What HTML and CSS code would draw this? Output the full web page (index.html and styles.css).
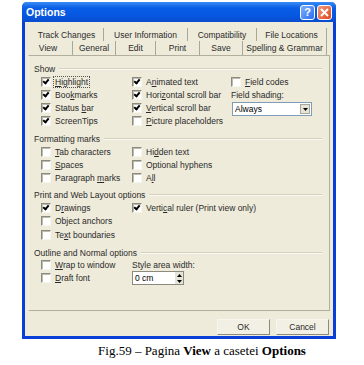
FILE: index.html
```html
<!DOCTYPE html>
<html lang="ro">
<head>
  <meta charset="UTF-8">
  <title>Options</title>
  <link rel="stylesheet" href="styles.css">
</head>
<body>
  <div class="window">
    <div class="titlebar">
      <span class="title">Options</span>
      <span class="tb-btn tb-help">?</span>
      <span class="tb-btn tb-close">
        <svg width="9" height="9" viewBox="0 0 9 9"><path d="M1 1 L8 8 M8 1 L1 8" stroke="#fff" stroke-width="2"/></svg>
      </span>
    </div>

    <div class="client">
      <div class="tabs tabs-back">
        <span class="tab" style="width:74px">Track Changes</span>
        <span class="tab" style="width:84px">User Information</span>
        <span class="tab" style="width:69px">Compatibility</span>
        <span class="tab" style="width:70px">File Locations</span>
      </div>
      <div class="tabs tabs-front">
        <span class="tab tab-active" style="width:45px">View</span>
        <span class="tab" style="width:43px">General</span>
        <span class="tab" style="width:40px">Edit</span>
        <span class="tab" style="width:44px">Print</span>
        <span class="tab" style="width:43px">Save</span>
        <span class="tab" style="width:84px">Spelling &amp; Grammar</span>
      </div>

      <div class="panel">
        <div class="group group-show">
          <div class="group-title"><span>Show</span></div>
          <div class="grid">
            <label class="cb"><i class="box on"></i><span class="focus"><u>H</u>ighlight</span></label>
            <label class="cb"><i class="box on"></i><span>A<u>n</u>imated text</span></label>
            <label class="cb"><i class="box"></i><span><u>F</u>ield codes</span></label>

            <label class="cb"><i class="box on"></i><span>Boo<u>k</u>marks</span></label>
            <label class="cb"><i class="box on"></i><span>Hori<u>z</u>ontal scroll bar</span></label>
            <span class="plain">Field shadin<u>g</u>:</span>

            <label class="cb"><i class="box on"></i><span>Status <u>b</u>ar</span></label>
            <label class="cb"><i class="box on"></i><span><u>V</u>ertical scroll bar</span></label>
            <div class="select">
              <span>Always</span>
              <i class="drop"><svg width="5" height="3" viewBox="0 0 5 3"><path d="M0 0 H5 L2.5 3 Z" fill="#000"/></svg></i>
            </div>

            <label class="cb"><i class="box on"></i><span>ScreenTips</span></label>
            <label class="cb"><i class="box"></i><span><u>P</u>icture placeholders</span></label>
          </div>
        </div>

        <div class="group group-marks">
          <div class="group-title"><span>Formatting marks</span></div>
          <div class="grid">
            <label class="cb"><i class="box"></i><span><u>T</u>ab characters</span></label>
            <label class="cb"><i class="box"></i><span>Hi<u>d</u>den text</span></label>
            <span></span>
            <label class="cb"><i class="box"></i><span><u>S</u>paces</span></label>
            <label class="cb"><i class="box"></i><span>Optional hyphens</span></label>
            <span></span>
            <label class="cb"><i class="box"></i><span>Paragraph <u>m</u>arks</span></label>
            <label class="cb"><i class="box"></i><span>A<u>l</u>l</span></label>
          </div>
        </div>

        <div class="group group-print">
          <div class="group-title"><span>Print and Web Layout options</span></div>
          <div class="grid">
            <label class="cb"><i class="box on"></i><span>D<u>r</u>awings</span></label>
            <label class="cb wide"><i class="box on"></i><span>Verti<u>c</u>al ruler (Print view only)</span></label>
            <label class="cb"><i class="box"></i><span>Object anchors</span></label>
            <span></span>
            <span></span>
            <label class="cb"><i class="box"></i><span>Te<u>x</u>t boundaries</span></label>
          </div>
        </div>

        <div class="group group-outline">
          <div class="group-title"><span>Outline and Normal options</span></div>
          <div class="grid">
            <label class="cb"><i class="box"></i><span><u>W</u>rap to window</span></label>
            <span class="plain">Style area width:</span>
            <span></span>
            <label class="cb"><i class="box"></i><span><u>D</u>raft font</span></label>
            <div class="spin">
              <span>0 cm</span>
              <i class="arrows">
                <svg width="5" height="3" viewBox="0 0 5 3"><path d="M0 3 H5 L2.5 0 Z" fill="#000"/></svg>
                <svg width="5" height="3" viewBox="0 0 5 3"><path d="M0 0 H5 L2.5 3 Z" fill="#000"/></svg>
              </i>
            </div>
          </div>
        </div>
      </div>

      <div class="buttons">
        <button class="btn">OK</button>
        <button class="btn">Cancel</button>
      </div>
    </div>
  </div>

  <p class="caption">Fig.59 &ndash; Pagina <b>View</b> a casetei <b>Options</b></p>
</body>
</html>
```

FILE: styles.css
```css
body {
  margin: 0;
  background: #fff;
  font-family: "Liberation Sans", Arial, sans-serif;
  font-size: 8.5px;
  color: #000;
}

.window {
  margin: 2px 0 0 22px;
  width: 308px;
  height: 334px;
  border: 3px solid #0a3ed8;
  border-top: none;
  border-radius: 5px 5px 0 0;
  background: #eeebda;
  display: flex;
  flex-direction: column;
}

.titlebar {
  height: 20px;
  margin: 0 -3px;
  padding: 0 4px 0 4px;
  display: flex;
  align-items: center;
  gap: 2px;
  background: linear-gradient(#3a8cf5, #0a5ee6 30%, #0656e0 70%, #0a4ccc);
  border-radius: 5px 5px 0 0;
}

.title {
  flex: 1;
  color: #fff;
  font-weight: bold;
  font-size: 10.5px;
}

.tb-btn {
  width: 15px;
  height: 15px;
  border: 1px solid #fff;
  border-radius: 3px;
  box-sizing: border-box;
  display: flex;
  align-items: center;
  justify-content: center;
  color: #fff;
  font-weight: bold;
  font-size: 11px;
}

.tb-help {
  background: linear-gradient(135deg, #7fb0ff, #2a6ef0);
}

.tb-close {
  background: linear-gradient(135deg, #f29a7e, #e0481c);
}

.client {
  flex: 1;
  display: flex;
  flex-direction: column;
  padding: 6px 3px 0 3px;
}

.tabs {
  display: flex;
  height: 13px;
}

.tabs-back {
  padding-left: 2px;
}

.tabs-front {
  height: 14px;
}

.tab {
  display: flex;
  align-items: center;
  justify-content: center;
  border-right: 1px solid #a9a797;
  box-sizing: border-box;
  white-space: nowrap;
  color: #2a2a2a;
}

.tab-active {
  padding-right: 4px;
}

.panel {
  height: 256px;
  border: 1px solid #b2af9f;
  border-left-color: #f4f2e6;
  padding: 7px 5px 0 5px;
  box-sizing: border-box;
}

.group-title {
  display: flex;
  align-items: center;
  gap: 4px;
  height: 12px;
  color: #2a2a2a;
}

.group-title::after {
  content: "";
  flex: 1;
  height: 0;
  border-top: 1px solid #d3d0bd;
  border-bottom: 1px solid #fbfaf2;
  margin-right: 2px;
}

.grid {
  display: grid;
  grid-template-columns: 91px 99px 1fr;
  grid-auto-rows: 13px;
  padding-left: 8px;
  align-items: center;
}

.group-marks {
  margin-top: 6px;
}

.group-print {
  margin-top: 5px;
}

.group-print .grid {
  grid-auto-rows: 13.5px;
}

.group-print .wide {
  grid-column: 2 / 4;
}

.group-outline {
  margin-top: 5px;
}

.group-outline .grid {
  grid-template-rows: 12px 15px;
}

.cb {
  display: flex;
  align-items: center;
  gap: 4px;
  white-space: nowrap;
  color: #2a2a2a;
}

.box {
  width: 8px;
  height: 8px;
  flex: none;
  background: #fff;
  border: 1px solid;
  border-color: #8c8a7e #f7f6ee #f7f6ee #8c8a7e;
  box-shadow: inset 1px 1px 0 #bdbbad;
  position: relative;
  margin-left: -1px;
}

.box.on::after {
  content: "";
  position: absolute;
  left: 2px;
  top: 0;
  width: 2px;
  height: 4px;
  border: solid #000;
  border-width: 0 2px 2px 0;
  transform: rotate(40deg);
}

.focus {
  outline: 1px dotted #555;
  padding: 0 1px;
  margin-left: -1px;
}

.plain {
  color: #2a2a2a;
  white-space: nowrap;
  margin-left: -1px;
}

.select {
  grid-row: span 2;
  align-self: start;
  margin-top: 1px;
  width: 80px;
  height: 14px;
  box-sizing: border-box;
  background: #fff;
  border: 1px solid #7f9db9;
  display: flex;
  align-items: center;
  padding-left: 2px;
}

.select span,
.spin span {
  flex: 1;
}

.drop {
  width: 10px;
  height: 10px;
  margin-right: 1px;
  background: #e6e4d6;
  border: 1px solid #a8a698;
  box-sizing: border-box;
  display: flex;
  align-items: center;
  justify-content: center;
}

.spin {
  width: 52px;
  height: 14px;
  box-sizing: border-box;
  background: #fff;
  border: 1px solid #8c8a7e;
  display: flex;
  align-items: center;
  padding-left: 2px;
  margin-left: -1px;
}

.arrows {
  width: 8px;
  height: 12px;
  display: flex;
  flex-direction: column;
  align-items: center;
  justify-content: space-around;
  background: #e6e4d6;
}

.buttons {
  display: flex;
  justify-content: flex-end;
  gap: 6px;
  padding: 8px 1px 0 0;
}

.btn {
  width: 53px;
  height: 16px;
  padding: 0;
  font: inherit;
  color: #2a2a2a;
  background: #f2f0e4;
  border: 1px solid #8c8a7e;
  border-top-color: #f6f5ee;
  border-left-color: #f6f5ee;
  border-radius: 0;
}

.caption {
  margin: 4px 0 0 0;
  text-align: center;
  font-family: "Liberation Serif", "Times New Roman", serif;
  font-size: 13px;
  padding-left: 40px;
}
```
